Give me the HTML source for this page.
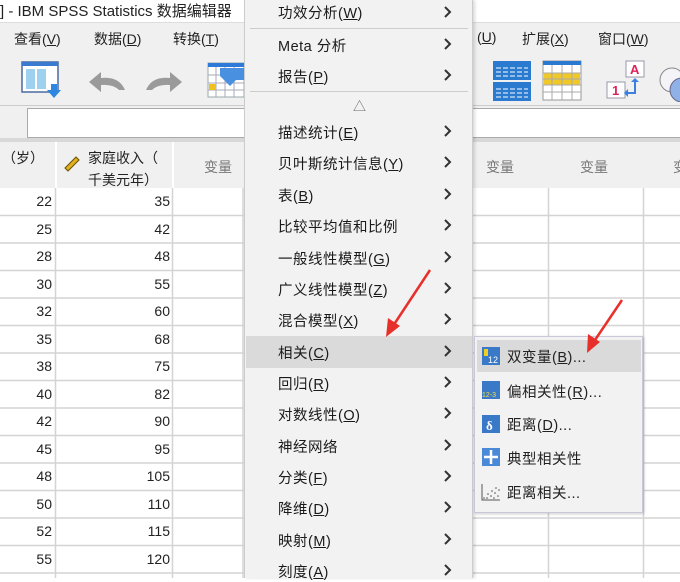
<!DOCTYPE html>
<html><head><meta charset="utf-8"><style>
*{margin:0;padding:0;box-sizing:border-box}
body{width:680px;height:578px;overflow:hidden;position:relative;background:#fff;font-family:"Liberation Sans","Noto Sans CJK SC",sans-serif;color:#222}
.a{position:absolute}
.t{font-size:14px;white-space:nowrap}
.mi{position:absolute;left:278px;font-size:14.5px;white-space:nowrap;color:#1a1a1a;letter-spacing:0.5px}
.ch{position:absolute;left:444px;width:8px;height:12px}
u{text-decoration:underline}
.si{position:absolute;left:507px;font-size:14.5px;white-space:nowrap;letter-spacing:0.5px}
</style></head><body>
<div class="a t" style="left:0;top:0;font-size:15px;">] - IBM SPSS Statistics 数据编辑器</div>
<div class="a" style="left:0;top:22px;width:680px;height:116px;background:#f0f0f0;border-top:1px solid #ddd"></div>
<div class="a t" style="left:14px;top:29px">查看(<u>V</u>)</div>
<div class="a t" style="left:94px;top:29px">数据(<u>D</u>)</div>
<div class="a t" style="left:173px;top:29px">转换(<u>T</u>)</div>
<div class="a t" style="left:477px;top:29px">(<u>U</u>)</div>
<div class="a t" style="left:522px;top:29px">扩展(<u>X</u>)</div>
<div class="a t" style="left:598px;top:29px">窗口(<u>W</u>)</div>
<div class="a" style="left:0;top:105px;width:680px;height:1px;background:#ccc"></div>
<svg class="a" style="left:20px;top:60px" width="42" height="40">
<rect x="2" y="2" width="36" height="30" fill="#fff" stroke="#4a6aa0" stroke-width="1.5"/>
<rect x="2" y="2" width="36" height="4" fill="#3a7ad0"/>
<rect x="6" y="9" width="9" height="20" fill="#9ed0f0"/><rect x="17" y="9" width="9" height="20" fill="#9ed0f0"/>
<path d="M31 24h6v6h4l-7 8-7-8h4z" fill="#2e86e0"/></svg>
<svg class="a" style="left:85px;top:68px" width="44" height="26"><path d="M4 14 L16 4 L16 10 Q34 8 40 22 L34 22 Q28 16 16 17 L16 24 Z" fill="#9a9a9a"/></svg>
<svg class="a" style="left:142px;top:68px" width="44" height="26"><path d="M40 14 L28 4 L28 10 Q10 8 4 22 L10 22 Q16 16 28 17 L28 24 Z" fill="#9a9a9a"/></svg>
<svg class="a" style="left:207px;top:61px" width="38" height="38">
<rect x="1" y="2" width="36" height="34" fill="#fff" stroke="#9aa" /><rect x="1" y="2" width="36" height="4" fill="#2e7ad8"/>
<path d="M1 14h36M1 22h36M1 29h36M9 6v30M18 6v30M27 6v30" stroke="#aab" fill="none"/>
<rect x="2" y="23" width="7" height="6" fill="#f0c020"/><path d="M13 7h24v12h-8l-6 6-10-10z" fill="#4a90e0"/></svg>
<svg class="a" style="left:492px;top:60px" width="40" height="42">
<rect x="1" y="1" width="38" height="19" fill="#2a7ad0"/><rect x="1" y="22" width="38" height="19" fill="#2a7ad0"/>
<path d="M4 8h32M4 12h32M4 16h32M4 29h32M4 33h32M4 37h32" stroke="#fff" stroke-dasharray="5 2"/></svg>
<svg class="a" style="left:542px;top:60px" width="40" height="42">
<rect x="1" y="1" width="38" height="39" fill="#fff" stroke="#999"/><rect x="1" y="1" width="38" height="4" fill="#2a7ad0"/>
<rect x="2" y="13" width="36" height="12" fill="#f0c828"/>
<path d="M1 13h38M1 19h38M1 25h38M1 32h38M10 5v35M20 5v35M30 5v35" stroke="#aaa"/></svg>
<svg class="a" style="left:606px;top:60px" width="74" height="42">
<rect x="20" y="1" width="18" height="16" fill="#fff" stroke="#99a"/><text x="24" y="14" font-size="13" font-weight="bold" fill="#e0205a" font-family="Liberation Sans">A</text>
<rect x="1" y="22" width="18" height="16" fill="#fff" stroke="#99a"/><text x="6" y="35" font-size="13" font-weight="bold" fill="#e0205a" font-family="Liberation Sans">1</text>
<path d="M22 32h6v-10h-3l4-4 4 4h-3v12h-8v3l-4-4 4-4z" fill="#3a80e0"/>
<circle cx="66" cy="20" r="12" fill="#f4f4f8" stroke="#888"/><circle cx="76" cy="30" r="12" fill="#90b0e8" stroke="#668"/></svg>
<div class="a" style="left:27px;top:108px;width:660px;height:30px;background:#fff;border:1px solid #aaa"></div>
<div class="a" style="left:0;top:138px;width:680px;height:4px;background:#d8d8d8"></div>
<div class="a" style="left:0;top:142px;width:680px;height:46px;background:#f0f0f0"></div>
<div class="a" style="left:55px;top:142px;width:2px;height:436px;background:#fff"></div>
<div class="a" style="left:172px;top:142px;width:2px;height:436px;background:#fff"></div>
<div class="a t" style="left:2px;top:148px">（岁）</div>
<svg class="a" style="left:63px;top:154px" width="18" height="18"><path d="M2 14 L13 3 L16 6 L5 17 Z" fill="#e0b020" stroke="#6a5000"/></svg>
<div class="a t" style="left:88px;top:147px;line-height:22px">家庭收入（<br>千美元年）</div>
<div class="a t" style="left:204px;top:157px;color:#777">变量</div>
<div class="a t" style="left:486px;top:157px;color:#777">变量</div>
<div class="a t" style="left:580px;top:157px;color:#777">变量</div>
<div class="a t" style="left:673px;top:157px;color:#777">变</div>
<svg class="a" style="left:0;top:188px" width="680" height="390">
<g stroke="#d4d4d4" stroke-width="1.5">
<path d="M0 27.5H680M0 55H680M0 82.5H680M0 110H680M0 137.5H680M0 165H680M0 192.5H680M0 220H680M0 247.5H680M0 275H680M0 302.5H680M0 330H680M0 357.5H680M0 385H680"/>
<path d="M55.5 0V390M172.5 0V390M243 0V390M548.5 0V390M643.5 0V390"/>
</g></svg>
<div class="a" style="left:0;top:188px;width:52px;font-size:14px;text-align:right;line-height:27.5px">22<br>25<br>28<br>30<br>32<br>35<br>38<br>40<br>42<br>45<br>48<br>50<br>52<br>55</div>
<div class="a" style="left:57px;top:188px;width:113px;font-size:14px;text-align:right;line-height:27.5px">35<br>42<br>48<br>55<br>60<br>68<br>75<br>82<br>90<br>95<br>105<br>110<br>115<br>120</div>
<div class="a" style="left:244px;top:0;width:229px;height:578px;background:#f2f2f2;border-left:1px solid #ccc;border-right:1px solid #ccc;box-shadow:2px 0 3px rgba(0,0,0,.15)"></div>
<div class="a" style="left:250px;top:28px;width:218px;height:1px;background:#ccc"></div>
<div class="a" style="left:250px;top:91px;width:218px;height:1px;background:#ccc"></div>
<div class="a" style="left:246px;top:336px;width:226px;height:32px;background:#dadada"></div>
<div class="a" style="left:353px;top:96px;font-size:13px;color:#666">△</div>
<div class="mi" style="top:2px">功效分析(<u>W</u>)</div>
<div class="mi" style="top:35px">Meta 分析</div>
<div class="mi" style="top:66px">报告(<u>P</u>)</div>
<div class="mi" style="top:122px">描述统计(<u>E</u>)</div>
<div class="mi" style="top:153px">贝叶斯统计信息(<u>Y</u>)</div>
<div class="mi" style="top:185px">表(<u>B</u>)</div>
<div class="mi" style="top:216px">比较平均值和比例</div>
<div class="mi" style="top:248px">一般线性模型(<u>G</u>)</div>
<div class="mi" style="top:279px">广义线性模型(<u>Z</u>)</div>
<div class="mi" style="top:310px">混合模型(<u>X</u>)</div>
<div class="mi" style="top:342px">相关(<u>C</u>)</div>
<div class="mi" style="top:373px">回归(<u>R</u>)</div>
<div class="mi" style="top:404px">对数线性(<u>O</u>)</div>
<div class="mi" style="top:436px">神经网络</div>
<div class="mi" style="top:467px">分类(<u>F</u>)</div>
<div class="mi" style="top:498px">降维(<u>D</u>)</div>
<div class="mi" style="top:530px">映射(<u>M</u>)</div>
<div class="mi" style="top:561px">刻度(<u>A</u>)</div>
<svg class="a" style="left:443px;top:0" width="12" height="578">
<g stroke="#333" stroke-width="2" fill="none">
<path d="M2 7l5 5-5 5"/><path d="M2 39l5 5-5 5"/><path d="M2 70l5 5-5 5"/>
<path d="M2 126l5 5-5 5"/><path d="M2 157l5 5-5 5"/><path d="M2 189l5 5-5 5"/>
<path d="M2 220l5 5-5 5"/><path d="M2 252l5 5-5 5"/><path d="M2 283l5 5-5 5"/>
<path d="M2 314l5 5-5 5"/><path d="M2 346l5 5-5 5"/><path d="M2 377l5 5-5 5"/>
<path d="M2 408l5 5-5 5"/><path d="M2 440l5 5-5 5"/><path d="M2 471l5 5-5 5"/>
<path d="M2 502l5 5-5 5"/><path d="M2 534l5 5-5 5"/><path d="M2 565l5 5-5 5"/>
</g></svg>
<div class="a" style="left:474px;top:336px;width:169px;height:177px;background:#f2f2f2;border:1px solid #c8c8d8;box-shadow:1px 1px 3px rgba(0,0,0,.2)"></div>
<div class="a" style="left:477px;top:340px;width:164px;height:32px;background:#dadada"></div>
<svg class="a" style="left:481px;top:346px" width="20" height="160">
<rect x="1" y="1" width="18" height="18" fill="#3a78c8"/><rect x="3" y="3" width="4" height="7" fill="#f0d020"/><text x="7" y="17" font-size="9" fill="#fff" font-family="Liberation Sans">12</text>
<rect x="1" y="35" width="18" height="18" fill="#3a78c8"/><text x="1" y="51" font-size="7" fill="#f0e040" font-family="Liberation Sans">12-3</text>
<rect x="1" y="69" width="18" height="18" fill="#3a78c8"/><text x="5" y="84" font-size="13" font-weight="bold" fill="#fff" font-family="Liberation Serif">δ</text>
<rect x="1" y="102" width="18" height="18" fill="#4a88d8"/><path d="M10 104v14M3 111h14" stroke="#fff" stroke-width="2.5"/>
<g fill="#555"><circle cx="3" cy="152" r=".8"/><circle cx="7" cy="148" r=".8"/><circle cx="11" cy="145" r=".8"/><circle cx="15" cy="142" r=".8"/><circle cx="6" cy="152" r=".8"/><circle cx="10" cy="150" r=".8"/><circle cx="14" cy="147" r=".8"/><circle cx="18" cy="144" r=".8"/><circle cx="13" cy="152" r=".8"/><circle cx="17" cy="150" r=".8"/></g><path d="M1 138v16h18" stroke="#555" fill="none"/></svg>
<div class="si" style="top:346px">双变量(<u>B</u>)...</div>
<div class="si" style="top:381px">偏相关性(<u>R</u>)...</div>
<div class="si" style="top:414px">距离(<u>D</u>)...</div>
<div class="si" style="top:448px">典型相关性</div>
<div class="si" style="top:482px">距离相关...</div>
<svg class="a" style="left:0;top:0" width="680" height="578">
<path d="M430 270 L393 326" stroke="#e8302a" stroke-width="2.5"/><path d="M386 337 L388 318 L400 326 Z" fill="#e8302a"/>
<path d="M622 300 L593 343" stroke="#e8302a" stroke-width="2.5"/><path d="M587 353 L588 334 L600 342 Z" fill="#e8302a"/>
</svg>
</body></html>
